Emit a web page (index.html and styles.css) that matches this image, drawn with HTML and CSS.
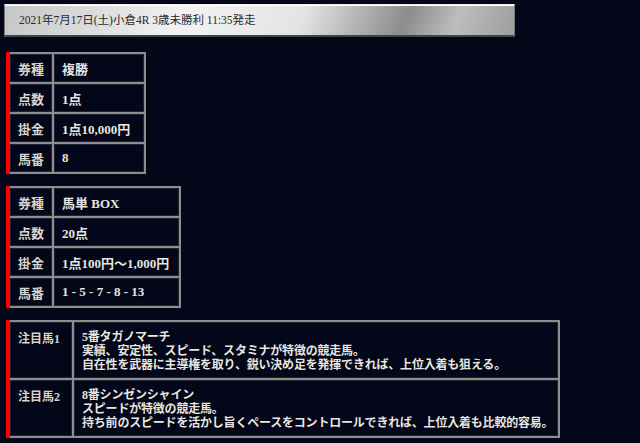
FILE: index.html
```html
<!DOCTYPE html>
<html lang="ja">
<head>
    <meta charset="UTF-8">
    <meta name="viewport" content="width=device-width, initial-scale=1.0">
    <title>買い目</title>
    <link rel="stylesheet" href="styles.css">
</head>
<body>
    <div class="race-bar">2021年7月17日(土)小倉4R 3歳未勝利 11:35発走</div>

    <table class="ticket">
        <tr><th>券種</th><td>複勝</td></tr>
        <tr><th>点数</th><td>1点</td></tr>
        <tr><th>掛金</th><td>1点10,000円</td></tr>
        <tr><th>馬番</th><td>8</td></tr>
    </table>

    <table class="ticket">
        <tr><th>券種</th><td>馬単 BOX</td></tr>
        <tr><th>点数</th><td>20点</td></tr>
        <tr><th>掛金</th><td>1点100円～1,000円</td></tr>
        <tr><th>馬番</th><td>1 - 5 - 7 - 8 - 13</td></tr>
    </table>

    <table class="ticket notes">
        <tr>
            <th>注目馬1</th>
            <td>5番タガノマーチ<br>実績、安定性、スピード、スタミナが特徴の競走馬。<br>自在性を武器に主導権を取り、鋭い決め足を発揮できれば、上位入着も狙える。</td>
        </tr>
        <tr>
            <th>注目馬2</th>
            <td>8番シンゼンシャイン<br>スピードが特徴の競走馬。<br>持ち前のスピードを活かし旨くペースをコントロールできれば、上位入着も比較的容易。</td>
        </tr>
    </table>
</body>
</html>
```

FILE: styles.css
```css
body {
    margin: 0;
    padding: 4px 6px;
    background-color: #04071a;
    font-family: "Liberation Serif", "Noto Sans CJK JP", serif;
    color: #e6e6e6;
}
.race-bar {
    width: 495px;
    height: 30px;
    margin-left: -2px;
    padding-left: 14px;
    line-height: 31px;
    font-size: 11.5px;
    color: #2a2a2a;
    border: 1px solid #777;
    border-top-color: #eee;
    border-bottom: 2px solid #444;
    background: linear-gradient(110deg, #c6c6c6 0%, #f2f2f2 35%, #e4e4e4 58%, #8c8c8c 78%, #bdbdbd 88%, #9e9e9e 100%);
    box-shadow: inset 0 1px 0 #fff;
}
.ticket {
    margin-top: 15px;
    border-collapse: collapse;
    border: 2px solid #a8a8a8;
    border-left: 4px solid #ff0000;
    font-size: 13px;
    font-weight: bold;
    text-shadow: 1px 1px 1px #000;
}
.ticket + .ticket {
    margin-top: 12px;
}
.ticket th,
.ticket td {
    height: 28px;
    padding: 0 10px 0 8px;
    border: 2px solid #8d8d8d;
    box-shadow: inset 0 0 0 1px #202330;
}
.ticket th {
    width: 26px;
    padding-right: 8px;
    color: #d4d4d4;
    text-align: center;
}
.ticket td {
    text-align: left;
    min-width: 72px;
}
.notes {
    width: 554px;
    font-size: 12px;
}
.notes th,
.notes td {
    height: auto;
    padding: 8px 2px 6px 8px;
    line-height: 14px;
    vertical-align: top;
    white-space: nowrap;
}
.notes td {
    letter-spacing: -0.2px;
}
.notes th {
    width: 48px;
    padding: 10px 6px 6px 8px;
    text-align: left;
}
```
